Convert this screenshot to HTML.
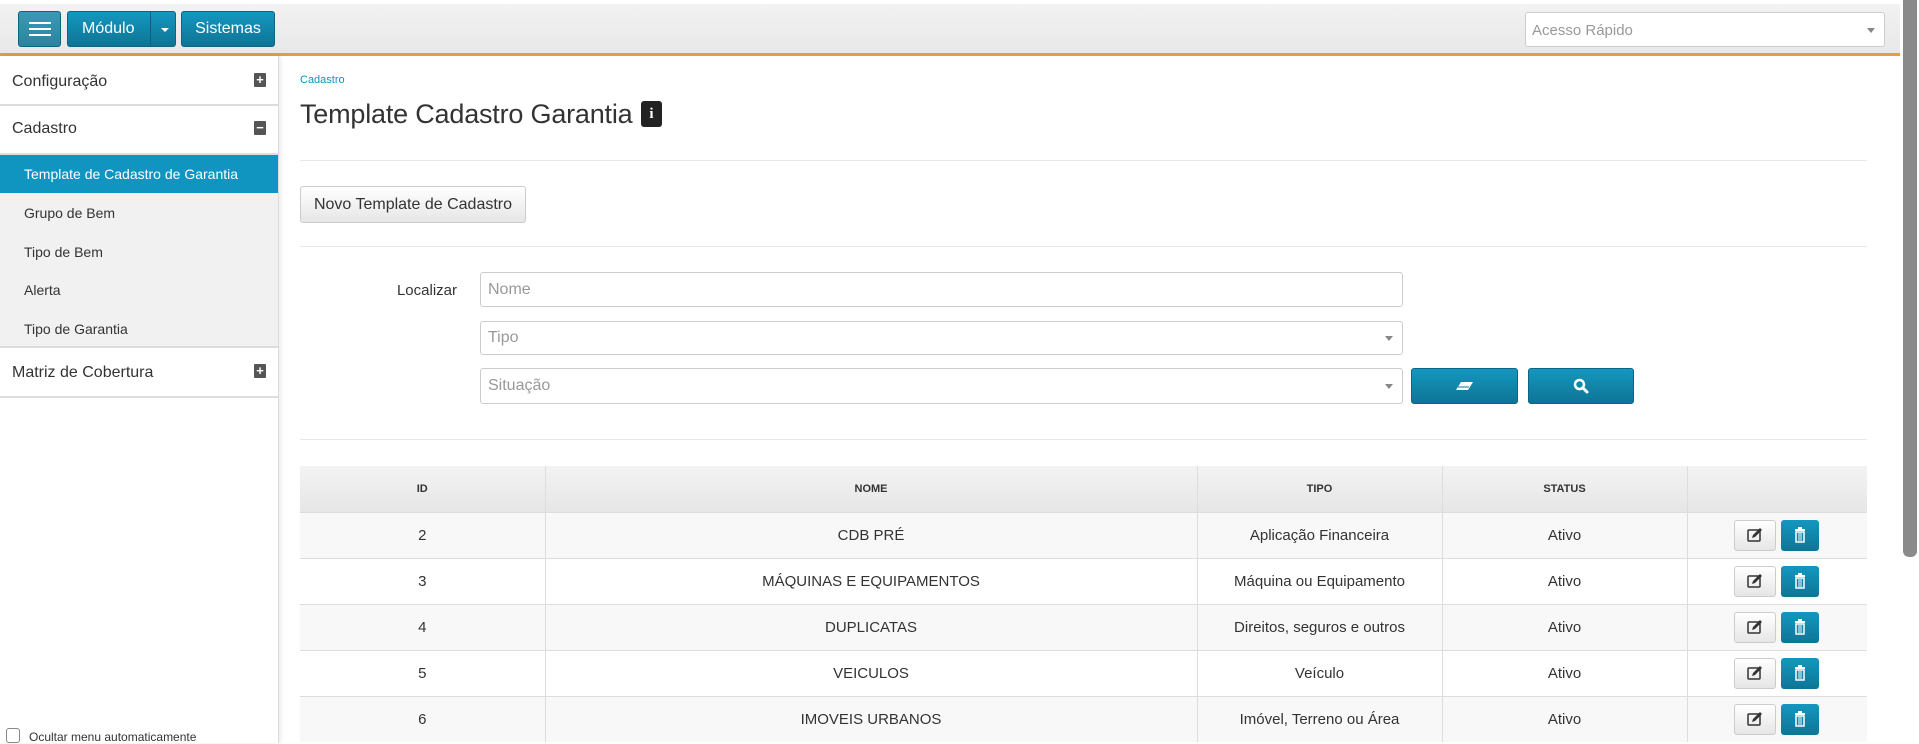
<!DOCTYPE html>
<html><head><meta charset="utf-8"><style>
*{box-sizing:border-box;margin:0;padding:0}
body{width:1919px;height:743px;overflow:hidden;font-family:"Liberation Sans",Arial,sans-serif;color:#333;background:#fff;position:relative}
.abs{position:absolute}
.top{left:0;top:4px;width:1900px;height:49px;background:linear-gradient(#f2f2f2,#e8e8e8)}
.orange{left:0;top:53px;width:1900px;height:3px;background:#ec9a3c}
.bbtn{position:absolute;background:linear-gradient(#1597bf,#0e7596);border:1px solid #0c6582;border-radius:3px;color:#fff;font-size:16px;display:flex;align-items:center;justify-content:center}
.side{left:0;top:56px;width:279px;height:687px;background:#fff;border-right:1px solid #ddd;box-shadow:2px 0 4px rgba(0,0,0,.08)}
.sitem{position:absolute;left:0;width:279px;font-size:16px;color:#333}
.sep{position:absolute;left:0;width:279px;height:2px;background:#ddd}
.pm{position:absolute;left:254px;width:12px;height:14px;background:#555;border-radius:1px;color:#fff;font-size:13px;font-weight:bold;line-height:14px;text-align:center}
.sub{position:absolute;left:24px;font-size:14px;color:#333}
.hr{position:absolute;left:300px;width:1567px;height:1px;background:#e8e8e8}
.inp{position:absolute;left:480px;width:923px;border:1px solid #ccc;border-radius:3px;background:#fff;color:#999;font-size:16px;padding-left:7px;display:flex;align-items:center}
.caret{position:absolute;right:9px;top:50%;margin-top:-2px;border-left:4px solid transparent;border-right:4px solid transparent;border-top:5px solid #888}
table{position:absolute;left:300px;top:466px;width:1567px;border-collapse:collapse;font-size:15px;color:#333}
th{height:46px;background:linear-gradient(#f3f3f3,#e6e6e6);font-size:11px;font-weight:bold;border-right:1px solid #ddd}
td{height:46px;text-align:center;border-top:1px solid #ddd;border-right:1px solid #ddd}
tr:nth-child(odd) td{background:#fff}
tr:nth-child(even) td{background:#f8f8f8}
th:last-child,td:last-child{border-right:none}
.eb{display:inline-block;vertical-align:middle;width:42px;height:31px;border:1px solid #ccc;border-radius:3px;background:linear-gradient(#fff,#e6e6e6);margin-left:46px}
.db{display:inline-block;vertical-align:middle;width:38px;height:31px;border-radius:3px;background:linear-gradient(#1597bf,#0e7596);margin-left:5px}
</style></head><body>
<div class="abs top"></div>
<div class="abs orange"></div>
<div class="bbtn" style="left:18px;top:11px;width:43px;height:36px;background:linear-gradient(#3a99b5,#2b849f)">
<svg width="22" height="16"><rect y="1" width="22" height="2" fill="#fff"/><rect y="7" width="22" height="2" fill="#fff"/><rect y="13" width="22" height="2" fill="#fff"/></svg></div>
<div class="bbtn" style="left:67px;top:11px;width:109px;height:36px;justify-content:flex-start;padding-left:14px">Módulo<span style="position:absolute;left:82px;top:0;bottom:0;border-left:1px solid #0b5f7a"></span><span style="position:absolute;left:93px;top:16px;border-left:4px solid transparent;border-right:4px solid transparent;border-top:4px solid #fff"></span></div>
<div class="bbtn" style="left:181px;top:11px;width:94px;height:36px">Sistemas</div>
<div class="abs" style="left:1525px;top:12px;width:360px;height:35px;border:1px solid #ccc;border-radius:3px;background:#fff;color:#999;font-size:15px;padding:9px 6px">Acesso Rápido<span class="caret"></span></div>
<div class="abs" style="left:1900px;top:0;width:19px;height:743px;background:#fff"><div style="margin:0 auto;width:14px;height:557px;background:#8a8a8a;border-radius:0 0 6px 6px"></div></div>

<div class="abs side"></div>
<div class="sitem" style="top:73px;left:12px">Configuração</div><div class="pm" style="top:73px">+</div>
<div class="sep" style="top:104px"></div>
<div class="sitem" style="top:120px;left:12px">Cadastro</div><div class="pm" style="top:121px">−</div>
<div class="sep" style="top:153px"></div>
<div class="abs" style="left:0;top:155px;width:278px;height:38px;background:#0f95bf"></div>
<div class="sub" style="top:166px;color:#fff">Template de Cadastro de Garantia</div>
<div class="abs" style="left:0;top:193px;width:278px;height:154px;background:#f1f1f1"></div>
<div class="sub" style="top:205px">Grupo de Bem</div>
<div class="sub" style="top:244px">Tipo de Bem</div>
<div class="sub" style="top:282px">Alerta</div>
<div class="sub" style="top:321px">Tipo de Garantia</div>
<div class="sep" style="top:346px"></div>
<div class="sitem" style="top:364px;left:12px">Matriz de Cobertura</div><div class="pm" style="top:364px">+</div>
<div class="sep" style="top:396px"></div>
<div class="abs" style="left:6px;top:728px;width:14px;height:15px;border:1px solid #888;border-radius:3px"></div>
<div class="abs" style="left:29px;top:730px;font-size:12px">Ocultar menu automaticamente</div>

<div class="abs" style="left:300px;top:74px;font-size:11px;color:#0f95bf">Cadastro</div>
<div class="abs" style="left:300px;top:99px;font-size:27px;color:#333;letter-spacing:-0.2px">Template Cadastro Garantia</div>
<div class="abs" style="left:641px;top:101px;width:21px;height:26px;background:#222;border-radius:3px;color:#fff;font-weight:bold;font-size:15px;text-align:center;line-height:26px;font-family:'Liberation Serif',serif">i</div>
<div class="hr" style="top:160px"></div>
<div class="abs" style="left:300px;top:186px;width:226px;height:37px;border:1px solid #ccc;border-radius:3px;background:linear-gradient(#fff,#e6e6e6);font-size:16px;text-align:center;line-height:35px">Novo Template de Cadastro</div>
<div class="hr" style="top:246px"></div>
<div class="abs" style="left:380px;top:282px;width:77px;text-align:right;font-size:15px">Localizar</div>
<div class="inp" style="top:272px;height:35px">Nome</div>
<div class="inp" style="top:321px;height:34px">Tipo<span class="caret"></span></div>
<div class="inp" style="top:368px;height:36px">Situação<span class="caret"></span></div>
<div class="bbtn" style="left:1411px;top:368px;width:107px;height:36px"><svg width="18" height="10"><path d="M5 1h12l-5 8H0z" fill="#fff"/><path d="M2 6h11" stroke="#0e7596" stroke-width="1"/></svg></div>
<div class="bbtn" style="left:1528px;top:368px;width:106px;height:36px"><svg width="16" height="16"><circle cx="6.5" cy="6.5" r="4.5" fill="none" stroke="#fff" stroke-width="2.5"/><path d="M10 10l4 4" stroke="#fff" stroke-width="3" stroke-linecap="round"/></svg></div>
<div class="hr" style="top:439px"></div>
<div class="abs" style="left:300px;top:466px;width:1567px;height:276px;border:1px solid #ddd;border-radius:4px"></div>
<table>
<tr><th style="width:245px">ID</th><th style="width:652px">NOME</th><th style="width:245px">TIPO</th><th style="width:245px">STATUS</th><th></th></tr>
<tr><td>2</td><td>CDB PRÉ</td><td>Aplicação Financeira</td><td>Ativo</td><td style="text-align:left"><span class="eb"></span><span class="db"></span></td></tr>
<tr><td>3</td><td>MÁQUINAS E EQUIPAMENTOS</td><td>Máquina ou Equipamento</td><td>Ativo</td><td style="text-align:left"><span class="eb"></span><span class="db"></span></td></tr>
<tr><td>4</td><td>DUPLICATAS</td><td>Direitos, seguros e outros</td><td>Ativo</td><td style="text-align:left"><span class="eb"></span><span class="db"></span></td></tr>
<tr><td>5</td><td>VEICULOS</td><td>Veículo</td><td>Ativo</td><td style="text-align:left"><span class="eb"></span><span class="db"></span></td></tr>
<tr><td>6</td><td>IMOVEIS URBANOS</td><td>Imóvel, Terreno ou Área</td><td>Ativo</td><td style="text-align:left"><span class="eb"></span><span class="db"></span></td></tr>
</table>
<script>
document.querySelectorAll('.eb').forEach(e=>e.innerHTML='<svg width="40" height="29"><rect x="13" y="9" width="12" height="11" fill="none" stroke="#333" stroke-width="1.5" rx="1"/><path d="M17 17l1-3 7-7 2 2-7 7z" fill="#333"/></svg>');
document.querySelectorAll('.db').forEach(e=>e.innerHTML='<svg width="38" height="31"><rect x="14" y="9" width="10" height="2" fill="#fff"/><rect x="17" y="7" width="4" height="2" fill="#fff"/><rect x="15" y="12" width="8" height="10" fill="none" stroke="#fff" stroke-width="1.5"/><path d="M18 13v8M20 13v8" stroke="#fff"/></svg>');
</script>
</body></html>
